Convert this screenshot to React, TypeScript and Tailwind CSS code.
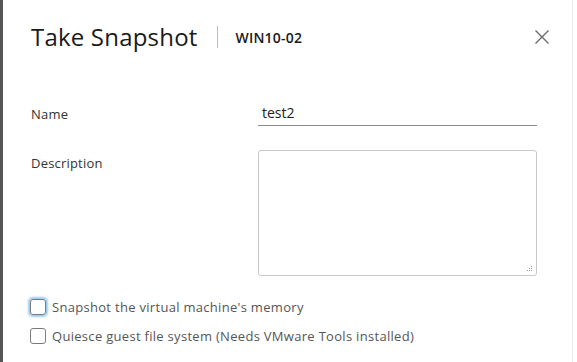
import React from "react";

export default function App() {
  return (
    <div className="relative w-[577px] h-[362px] overflow-hidden bg-white" style={{ fontFamily: "'Open Sans', Lato, sans-serif" }}>
      <div className="flex h-full">
        <div className="w-[3px] bg-[#555555] shrink-0" />
        <div className="flex-1 flex flex-col">
          <div className="flex items-center h-[74px] pl-[28px] pr-[22px]">
            <div className="text-[24px] leading-none text-[#1a1a1a] font-normal tracking-[0.2px]">Take Snapshot</div>
            <div className="w-px h-[22px] bg-[#bdbdbd] ml-[19px] mr-[18px]" />
            <div className="text-[14px] font-semibold text-[#1a1a1a] tracking-[0.2px]">WIN10-02</div>
            <div className="flex-1" />
            <svg width="16" height="16" viewBox="0 0 16 16" className="text-[#6b6b6b]">
              <path d="M1.5 1.5 L14.5 14.5 M14.5 1.5 L1.5 14.5" stroke="currentColor" strokeWidth="1.4" fill="none" />
            </svg>
          </div>
          <div className="flex items-end pl-[28px] pr-[35px] mt-[28px]">
            <div className="w-[227px] text-[13px] text-[#333] pb-[2px] tracking-[0.2px]">Name</div>
            <div className="flex-1 border-b border-[#8c8c8c] pl-[4px] pb-[2px] text-[14px] text-[#222]">test2</div>
          </div>
          <div className="flex pl-[28px] pr-[35px] mt-[24px]">
            <div className="w-[227px] text-[13px] text-[#333] pt-[4px] tracking-[0.2px]">Description</div>
            <div className="relative flex-1 h-[126px] border border-[#c8c8c8] rounded-[3px]">
              <svg width="6" height="6" viewBox="0 0 6 6" className="absolute right-[3px] bottom-[3px]">
                <g fill="#9a9a9a">
                  <rect x="4" y="0" width="1" height="1" />
                  <rect x="2" y="2" width="1" height="1" />
                  <rect x="4" y="2" width="1" height="1" />
                  <rect x="0" y="4" width="1" height="1" />
                  <rect x="2" y="4" width="1" height="1" />
                  <rect x="4" y="4" width="1" height="1" />
                </g>
              </svg>
            </div>
          </div>
          <div className="flex flex-col gap-[13px] pl-[27px] mt-[23px]">
            <div className="flex items-center gap-[6px]">
              <div className="w-[16px] h-[16px] rounded-[3px] border border-[#7a7a7a] shadow-[0_0_2px_2px_rgba(90,170,230,0.6)]" />
              <span className="text-[13px] leading-[16px] text-[#565656] tracking-[0.3px]">Snapshot the virtual machine's memory</span>
            </div>
            <div className="flex items-center gap-[6px]">
              <div className="w-[16px] h-[16px] rounded-[3px] border border-[#7a7a7a]" />
              <span className="text-[13px] leading-[16px] text-[#565656] tracking-[0.3px]">Quiesce guest file system (Needs VMware Tools installed)</span>
            </div>
          </div>
        </div>
        <div className="w-px bg-[#ececec] mr-[4px] shrink-0" />
      </div>
    </div>
  );
}
